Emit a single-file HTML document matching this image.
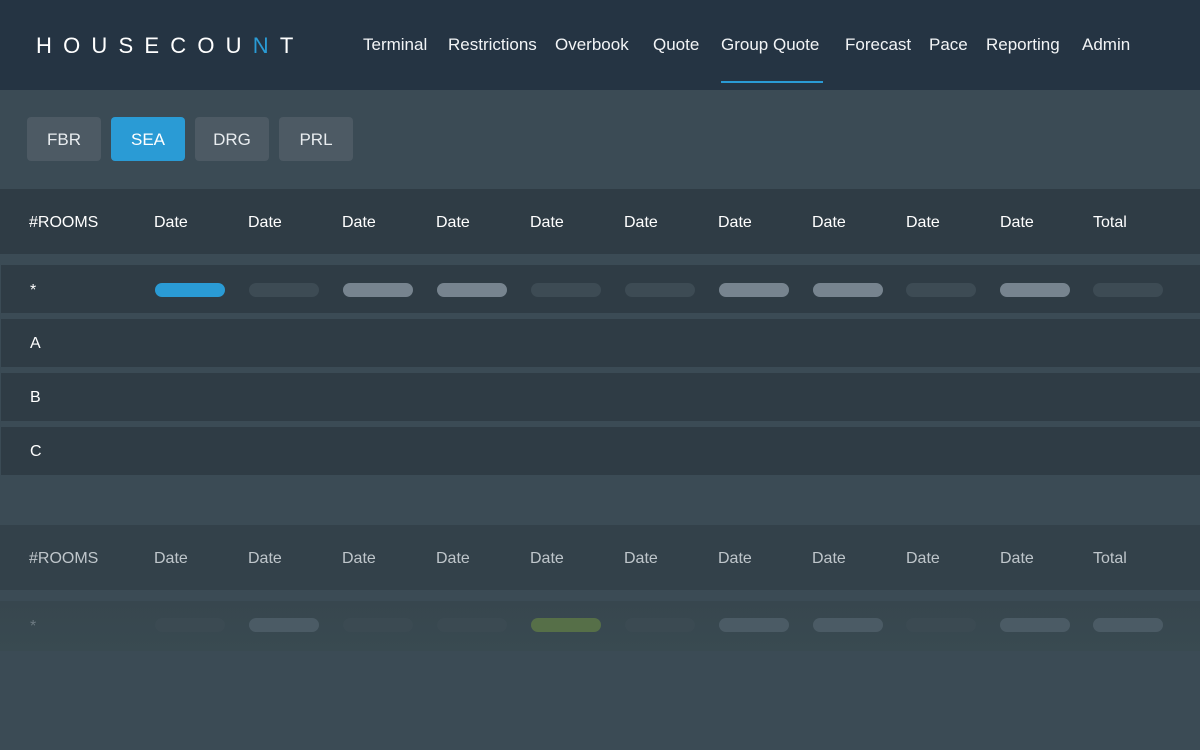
<!DOCTYPE html>
<html><head><style>
*{margin:0;padding:0;box-sizing:border-box}
body{width:1200px;height:750px;overflow:hidden;background:#3b4b55;font-family:"Liberation Sans",sans-serif;position:relative;color:#fff}
.a{position:absolute}
.hdr{left:0;top:0;width:1200px;height:90px;background:#253443}
.logo{left:36px;top:33px;font-size:22px;letter-spacing:11.2px;font-weight:400}
.nav{top:35px;font-size:17px;color:#f2f4f6}
.btn{top:117px;width:74px;height:44px;border-radius:4px;background:#4d5a64;font-size:17px;text-align:center;line-height:45px;color:#e8ecef}
.th{left:0;width:1200px;height:65px;background:#2f3c45}
.row{left:1px;width:1199px;height:48px;background:#2f3c45}
.t{font-size:16px}
.p{width:70px;height:14px;border-radius:7px}
</style></head><body>
<div class="a hdr"></div>
<div class="a logo">HOUSECOU<span style="color:#2a9bd5">N</span>T</div>
<div class="a nav" style="left:363px">Terminal</div>
<div class="a nav" style="left:448px">Restrictions</div>
<div class="a nav" style="left:555px">Overbook</div>
<div class="a nav" style="left:653px">Quote</div>
<div class="a nav" style="left:721px">Group Quote</div>
<div class="a nav" style="left:845px">Forecast</div>
<div class="a nav" style="left:929px">Pace</div>
<div class="a nav" style="left:986px">Reporting</div>
<div class="a nav" style="left:1082px">Admin</div>
<div class="a" style="left:721px;top:81px;width:102px;height:2px;background:#2a9bd5"></div>

<div class="a btn" style="left:27px">FBR</div>
<div class="a btn" style="left:111px;background:#2a9bd5;color:#fff">SEA</div>
<div class="a btn" style="left:195px">DRG</div>
<div class="a btn" style="left:279px">PRL</div>

<div class="a th" style="top:189px"></div>
<div class="a row" style="top:265px"></div>
<div class="a row" style="top:319px"></div>
<div class="a row" style="top:373px"></div>
<div class="a row" style="top:427px"></div>

<div class="a th" style="top:525px;background:#33414a"></div>
<div class="a" style="left:0;top:601px;width:1200px;height:50px;background:linear-gradient(#37464e,#394a51)"></div>

<div id="c"></div>
<script>
var xs=[154,248,342,436,530,624,718,812,906,1000];
var h='';
function lab(y,col){h+='<div class="a t" style="left:29px;top:'+y+'px;color:'+col+'">#ROOMS</div>';xs.forEach(function(x){h+='<div class="a t" style="left:'+x+'px;top:'+y+'px;color:'+col+'">Date</div>'});h+='<div class="a t" style="left:1093px;top:'+y+'px;color:'+col+'">Total</div>';}
lab(214,'#fff');lab(550,'#bfc6cb');
var px=[155,249,343,437,531,625,719,813,906,1000,1093];
var r1=['#2a9bd5','#3d4b54','#77848f','#77848f','#3d4b54','#3d4b54','#77848f','#77848f','#3d4b54','#77848f','#3d4b54'];
var r2=['#3b4a52','#4b5b65','#3b4a52','#3b4a52','#566f48','#3b4a52','#4b5b65','#4b5b65','#3b4a52','#4b5b65','#4b5b65'];
px.forEach(function(x,i){h+='<div class="a p" style="left:'+x+'px;top:283px;background:'+r1[i]+'"></div>';h+='<div class="a p" style="left:'+x+'px;top:618px;background:'+r2[i]+'"></div>';});
[['*',282],['A',335],['B',389],['C',443]].forEach(function(r){h+='<div class="a t" style="left:30px;top:'+r[1]+'px">'+r[0]+'</div>'});
h+='<div class="a t" style="left:30px;top:618px;color:#6d7a82">*</div>';
document.getElementById('c').innerHTML=h;
</script>
</body></html>
